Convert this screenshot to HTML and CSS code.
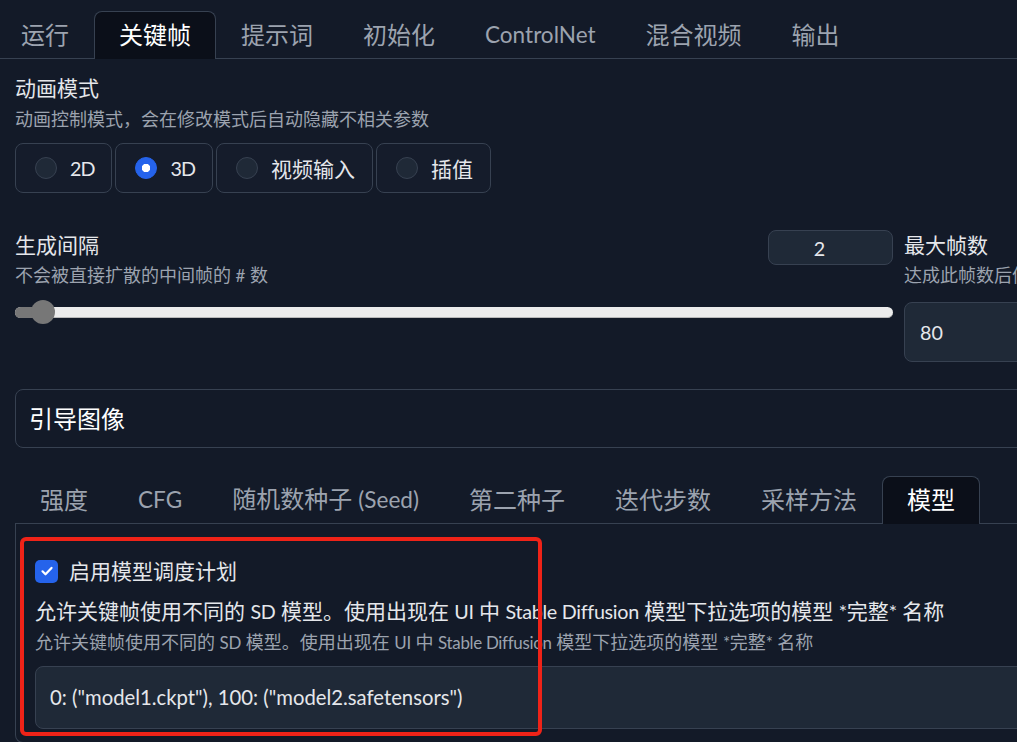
FILE: index.html
```html
<!DOCTYPE html>
<html lang="zh">
<head>
<meta charset="utf-8">
<title>Deforum 关键帧</title>
<link rel="stylesheet" href="styles.css">
</head>
<body>
<div class="app">
  <nav class="tabs top">
    <button class="tab">运行</button>
    <button class="tab active">关键帧</button>
    <button class="tab">提示词</button>
    <button class="tab">初始化</button>
    <button class="tab"><span class="en">ControlNet</span></button>
    <button class="tab">混合视频</button>
    <button class="tab">输出</button>
  </nav>

  <main class="panel">
    <section class="mode">
      <div class="label">动画模式</div>
      <div class="info">动画控制模式，会在修改模式后自动隐藏不相关参数</div>
      <div class="radios">
        <label class="radio"><span class="dot"></span><span class="en">2D</span></label>
        <label class="radio"><span class="dot checked"></span><span class="en">3D</span></label>
        <label class="radio"><span class="dot"></span>视频输入</label>
        <label class="radio"><span class="dot"></span>插值</label>
      </div>
    </section>

    <section class="row">
      <div class="col">
        <div class="slider-head">
          <div>
            <div class="label">生成间隔</div>
            <div class="info">不会被直接扩散的中间帧的 <span class="en">#</span> 数</div>
          </div>
          <div class="num-small"><span class="en">2</span></div>
        </div>
        <div class="slider">
          <div class="track"></div>
          <div class="fill"></div>
          <div class="thumb"></div>
        </div>
      </div>
      <div class="col">
        <div class="label">最大帧数</div>
        <div class="info">达成此帧数后停止</div>
        <div class="num-big"><span class="en">80</span></div>
      </div>
    </section>

    <section class="accordion">引导图像</section>

    <nav class="tabs sub">
      <button class="tab">强度</button>
      <button class="tab"><span class="en">CFG</span></button>
      <button class="tab">随机数种子 <span class="en">(Seed)</span></button>
      <button class="tab">第二种子</button>
      <button class="tab">迭代步数</button>
      <button class="tab">采样方法</button>
      <button class="tab active">模型</button>
    </nav>
    <section class="subpanel">
      <label class="check"><span class="box"><svg viewBox="0 0 16 16" width="16" height="16"><path d="M3.5 8.3l3 3 6-6.4" fill="none" stroke="#fff" stroke-width="2.2" stroke-linecap="round" stroke-linejoin="round"/></svg></span>启用模型调度计划</label>
      <div class="desc">允许关键帧使用不同的 <span class="en">SD</span> 模型。使用出现在 <span class="en">UI</span> 中 <span class="en">Stable Diffusion</span> 模型下拉选项的模型 <span class="en">*</span>完整<span class="en">*</span> 名称</div>
      <div class="info">允许关键帧使用不同的 <span class="en">SD</span> 模型。使用出现在 <span class="en">UI</span> 中 <span class="en">Stable Diffusion</span> 模型下拉选项的模型 <span class="en">*</span>完整<span class="en">*</span> 名称</div>
      <div class="textbox">0: ("model1.ckpt"), 100: ("model2.safetensors")</div>
    </section>
  </main>

  <div class="annot"></div>
</div>
</body>
</html>
```

FILE: styles.css
```css
* { box-sizing: border-box; }

html, body {
  margin: 0;
  background: #131a28;
  overflow: hidden;
}

body {
  width: 1017px;
  height: 742px;
  font-family: Lato, "Noto Sans CJK SC", sans-serif;
  color: #e5e7eb;
}

.en {
  font-size: 0.94em;
}

.app {
  position: relative;
  width: 1800px;
}

.tabs {
  display: flex;
  border-bottom: 1px solid #374151;
}

.tabs.top {
  margin-left: -4px;
  padding-top: 11px;
}

.tab {
  font-family: inherit;
  font-size: 24px;
  line-height: 44px;
  height: 48px;
  margin-bottom: -1px;
  padding: 0 24px 2px;
  border: 1px solid transparent;
  border-bottom: none;
  border-radius: 8px 8px 0 0;
  background: none;
  color: #9ca3af;
  white-space: nowrap;
}

.tab.active {
  background: #0b0f19;
  border-color: #374151;
  color: #ffffff;
}

.panel {
  padding: 14px 0 0 15px;
}

.label {
  font-size: 21px;
  line-height: 30px;
  color: #e5e7eb;
  white-space: nowrap;
}

.info {
  font-size: 18px;
  line-height: 28px;
  color: #9ca3af;
  white-space: nowrap;
  margin-top: 1px;
}

.mode .info {
  margin-top: 2px;
}

.radios {
  display: flex;
  gap: 3px;
  margin-top: 10px;
}

.radio {
  display: flex;
  align-items: center;
  gap: 13px;
  height: 50px;
  padding: 0 17px 0 19px;
  border: 1px solid #374151;
  border-radius: 8px;
  background: #151c2b;
  font-size: 21px;
  color: #e5e7eb;
}

.radio .en {
  letter-spacing: -1px;
}

.dot {
  width: 22px;
  height: 22px;
  border-radius: 50%;
  border: 1px solid #374151;
  background: #1f2937;
}

.dot.checked {
  border-color: #2563eb;
  background: #2563eb radial-gradient(circle, #ffffff 0 4px, transparent 4.5px);
}

.row {
  display: grid;
  grid-template-columns: 878px 878px;
  gap: 11px;
  margin-top: 37px;
}

.slider-head {
  display: flex;
  justify-content: space-between;
  align-items: flex-start;
}

.num-small {
  width: 125px;
  height: 35px;
  border: 1px solid #374151;
  border-radius: 8px;
  background: #1f2937;
  font-size: 21px;
  line-height: 33px;
  text-align: center;
  padding-right: 22px;
  color: #e5e7eb;
}

.slider {
  position: relative;
  height: 24px;
  margin-top: 10px;
}

.track {
  position: absolute;
  left: 0;
  right: 0;
  top: 7px;
  height: 11px;
  border-radius: 6px;
  background: #ececec;
  border-bottom: 1px solid #b9b9b9;
}

.fill {
  position: absolute;
  left: 0;
  top: 7px;
  width: 30px;
  height: 11px;
  border-radius: 6px 0 0 6px;
  background: #777777;
}

.thumb {
  position: absolute;
  left: 16px;
  top: 0;
  width: 24px;
  height: 24px;
  border-radius: 50%;
  background: #777777;
}

.num-big {
  height: 60px;
  margin-top: 13px;
  padding-left: 15px;
  border: 1px solid #374151;
  border-radius: 8px;
  background: #1f2937;
  font-size: 21px;
  line-height: 58px;
  color: #e5e7eb;
}

.accordion {
  width: 1767px;
  height: 59px;
  margin-top: 27px;
  padding-left: 13px;
  border: 1px solid #374151;
  border-radius: 8px;
  font-size: 24px;
  line-height: 57px;
  color: #ffffff;
}

.tabs.sub {
  width: 1767px;
  margin-top: 28px;
}

.subpanel {
  width: 1767px;
  padding: 32px 19px 13px;
  border: 1px solid #374151;
  border-top: none;
  border-radius: 0 0 8px 8px;
}

.check {
  display: flex;
  align-items: center;
  gap: 11px;
  font-size: 21px;
  line-height: 30px;
  color: #e5e7eb;
}

.box {
  display: flex;
  align-items: center;
  justify-content: center;
  width: 23px;
  height: 23px;
  border-radius: 5px;
  background: #2563eb;
}

.desc {
  margin-top: 10px;
  font-size: 21px;
  line-height: 30px;
  color: #e5e7eb;
  white-space: nowrap;
}

.subpanel .en {
  letter-spacing: -0.3px;
}

.textbox {
  height: 63px;
  margin-top: 9px;
  padding-left: 14px;
  border: 1px solid #374151;
  border-radius: 8px;
  background: #1f2937;
  font-size: 20.3px;
  line-height: 61px;
  color: #e5e7eb;
  white-space: nowrap;
}

.annot {
  position: absolute;
  left: 20px;
  top: 537px;
  width: 522px;
  height: 199px;
  border: 4px solid #ef2318;
  border-radius: 6px;
  pointer-events: none;
}
```
